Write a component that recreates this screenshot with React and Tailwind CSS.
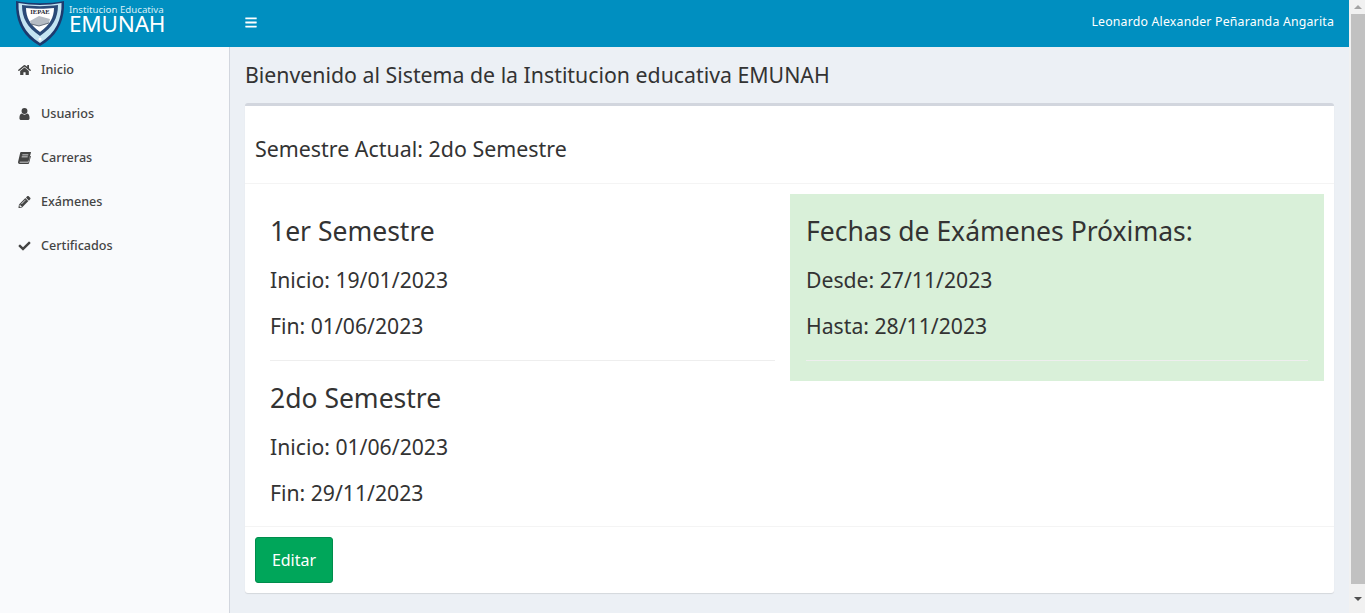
import { FaHome, FaPencilAlt, FaCheck, FaBars } from 'react-icons/fa'

function UserIcon({ className }) {
  return (
    <svg viewBox="0 0 11 13" className={className} fill="currentColor">
      <circle cx="5.5" cy="3.2" r="3.2" />
      <path d="M0 11 C0 8 1 6.3 2.6 6 C3.4 6.8 4.4 7.2 5.5 7.2 C6.6 7.2 7.6 6.8 8.4 6 C10 6.3 11 8 11 11 C11 12.3 10.2 13 9 13 L2 13 C0.8 13 0 12.3 0 11 Z" />
    </svg>
  )
}

function BookIcon({ className }) {
  return (
    <svg viewBox="0 0 13 12" className={className} fill="currentColor">
      <path d="M3 0 L12.6 0 C13 0 13 .4 12.9 .7 L10.6 9 C10.4 9.6 10 9.8 9.5 9.8 L2.2 9.8 C1.6 9.8 1.4 10.3 2 10.6 L10.4 10.6 L12.2 4 L13 4 L11 11.3 C10.9 11.7 10.6 12 10.2 12 L1.6 12 C.5 12 -.2 11 .1 9.8 L2.2 .8 C2.3 .3 2.6 0 3 0 Z" />
      <path d="M4.4 2.4 L10.4 2.4 L10.2 3.2 L4.2 3.2 Z M3.8 4.4 L9.8 4.4 L9.6 5.2 L3.6 5.2 Z" fill="#f9fafc" />
    </svg>
  )
}

const MENU = [
  { label: 'Inicio', icon: FaHome },
  { label: 'Usuarios', icon: UserIcon },
  { label: 'Carreras', icon: BookIcon },
  { label: 'Exámenes', icon: FaPencilAlt },
  { label: 'Certificados', icon: FaCheck },
]

function Logo() {
  return (
    <svg width="48" height="46" viewBox="0 0 48 46" className="shrink-0">
      <path d="M0 1 C14 4 34 4 48 1 C49 20 42 36 24 46 C6 36 -1 20 0 1 Z" fill="#1d3a6e" />
      <path d="M2.5 3 C16 5.5 32 5.5 45.5 3 C46 19 40 33 24 43 C8 33 2 19 2.5 3 Z" fill="#c4e4f2" />
      <path d="M6 5 C17 6.5 31 6.5 42 5 C42 18 37 27 24 36 C11 27 6 18 6 5 Z" fill="#2b4a78" />
      <path d="M10 8 C18 9 30 9 38 8 C38 17 34 25 24 32 C14 25 10 17 10 8 Z" fill="#ffffff" />
      <text x="24" y="13.5" textAnchor="middle" fontSize="6.5" fontWeight="700" fontFamily="Liberation Serif, serif" fill="#1f2937">IEPAE</text>
      <path d="M14 21 L23 16 L34 19 L33 23 L23 26 L15 24 Z" fill="#b6bcc4" />
      <path d="M15 24 L23 26 L33 23" fill="none" stroke="#4b5563" strokeWidth="0.8" />
      <circle cx="24" cy="39" r="1.5" fill="#ffffff" />
    </svg>
  )
}

function Header() {
  return (
    <header className="flex h-[47px] shrink-0 items-center bg-[#008fc0] text-white">
      <div className="flex w-[229px] shrink-0 items-start self-start pl-[16px]">
        <Logo />
        <div className="ml-[5px] flex flex-col">
          <span className="mt-[5px] text-[9.7px] leading-[10px] text-[#d8eef6]">Institucion Educativa</span>
          <span className="-mt-[1px] text-[22.5px] leading-[20px] tracking-[-0.2px]">EMUNAH</span>
        </div>
      </div>
      <FaBars className="mb-[3px] ml-[16px] h-[13px] w-[12px]" />
      <span className="mb-[2px] ml-auto pr-[15px] text-[12.3px] tracking-[0.2px]">Leonardo Alexander Peñaranda Angarita</span>
    </header>
  )
}

function Sidebar() {
  return (
    <aside className="flex w-[230px] shrink-0 flex-col border-r border-[#d2d6de] bg-[#f9fafc] pt-[1px]">
      {MENU.map((item) => (
        <a key={item.label} className="flex h-[44px] items-center pl-[18px] text-[12.6px] font-medium text-[#444]">
          <item.icon className="h-[12px] w-[13px] shrink-0" />
          <span className="ml-[10px]">{item.label}</span>
        </a>
      ))}
    </aside>
  )
}

function DateBlock({ title, lines, divider }) {
  return (
    <div>
      <h3 className="pt-[1px] text-[26.5px] leading-[33px] text-[#333]">{title}</h3>
      <div className="mt-[15px] flex flex-col gap-[13px]">
        {lines.map((line) => (
          <p key={line} className="text-[21.2px] leading-[33px] text-[#333]">{line}</p>
        ))}
      </div>
      {divider && <hr className="mt-[18px] border-[#eee]" />}
    </div>
  )
}

export default function App() {
  return (
    <div className="flex h-[613px] w-full overflow-hidden bg-[#ecf0f5] font-['Noto_Sans',sans-serif]">
      <div className="flex min-w-0 flex-1 flex-col">
        <Header />
        <div className="flex min-h-0 flex-1">
          <Sidebar />
          <main className="min-w-0 flex-1 px-[15px]">
            <h1 className="h-[56px] pt-[13px] text-[21.3px] leading-[30px] text-[#333]">
              Bienvenido al Sistema de la Institucion educativa EMUNAH
            </h1>
            <section className="h-[490px] rounded-[3px] border-t-[3px] border-[#d2d6de] bg-white shadow-[0_1px_1px_rgba(0,0,0,0.1)]">
              <div className="h-[78px] border-b border-[#f4f4f4] px-[10px] pt-[28px]">
                <h2 className="text-[21.4px] leading-[30px] text-[#333]">Semestre Actual: 2do Semestre</h2>
              </div>
              <div className="flex h-[342px] px-[10px] pt-[10px]">
                <div className="w-[535px] shrink-0 px-[15px] pt-[20px]">
                  <DateBlock title="1er Semestre" lines={['Inicio: 19/01/2023', 'Fin: 01/06/2023']} divider />
                  <div className="mt-[20px]">
                    <DateBlock title="2do Semestre" lines={['Inicio: 01/06/2023', 'Fin: 29/11/2023']} />
                  </div>
                </div>
                <div className="h-[187px] flex-1 bg-[#d9f0d9] px-[16px] pt-[20px]">
                  <DateBlock title="Fechas de Exámenes Próximas:" lines={['Desde: 27/11/2023', 'Hasta: 28/11/2023']} divider />
                </div>
              </div>
              <div className="border-t border-[#f4f4f4] p-[10px]">
                <button className="h-[46px] w-[78px] rounded-[3px] border border-[#008d4c] bg-[#00a65a] text-[16px] text-white">
                  Editar
                </button>
              </div>
            </section>
          </main>
        </div>
      </div>
      <div className="flex w-[16px] shrink-0 flex-col items-end bg-[#f1f1f1]">
        <div className="flex h-[14px] w-[14px] items-center justify-center">
          <div className="h-0 w-0 border-x-[4px] border-b-[4px] border-x-transparent border-b-[#a3a3a3]" />
        </div>
        <div className="h-[570px] w-[14px] bg-[#c1c1c1]" />
        <div className="flex h-[29px] w-[14px] items-center justify-center">
          <div className="h-0 w-0 border-x-[4px] border-t-[4px] border-x-transparent border-t-[#505050]" />
        </div>
      </div>
    </div>
  )
}
